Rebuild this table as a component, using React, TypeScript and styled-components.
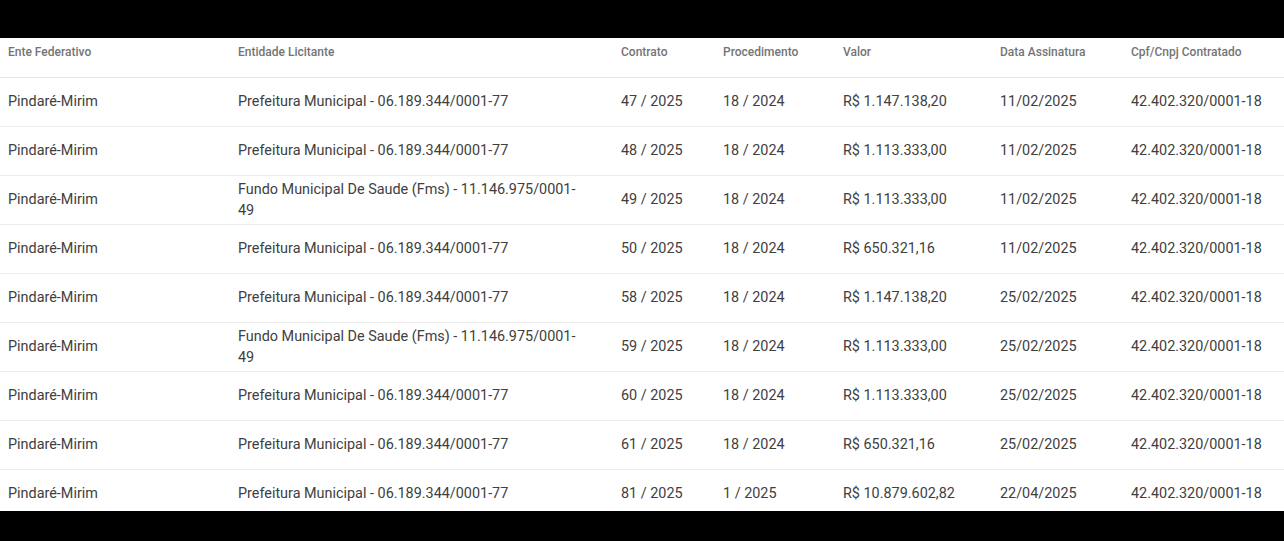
import styled, { createGlobalStyle } from "styled-components";

const GlobalStyle = createGlobalStyle`
    html, body {
        margin: 0;
        padding: 0;
        background: #000;
        font-family: Roboto, "Liberation Sans", sans-serif;
    }
`;

const Screen = styled.div`
    display: flex;
    flex-direction: column;
    width: 1284px;
    height: 541px;
    padding-top: 38px;
    box-sizing: border-box;
    background: #000;
    overflow: hidden;
`;

const Sheet = styled.div`
    background: #fff;
    width: 100%;
    height: 473px;
    overflow: hidden;
`;

const Table = styled.table`
    width: 100%;
    border-collapse: collapse;
    table-layout: fixed;
`;

const HeadCell = styled.th<{ $w: number }>`
    width: ${p => p.$w}px;
    height: 39px;
    padding: 7px 0 0 8px;
    box-sizing: border-box;
    vertical-align: top;
    text-align: left;
    font-size: 12px;
    font-weight: 500;
    color: #747474;
    border-bottom: 1px solid #e6e6e6;
`;

const Row = styled.tr`
    height: 49px;
    border-bottom: 1px solid #ebebeb;
`;

const Cell = styled.td<{ $pr?: number }>`
    padding: 0 ${p => p.$pr ?? 8}px 0 8px;
    font-size: 14.4px;
    line-height: 21px;
    color: #404040;
    vertical-align: middle;
`;

const columns = [
    { label: "Ente Federativo", w: 230 },
    { label: "Entidade Licitante", w: 383 },
    { label: "Contrato", w: 102 },
    { label: "Procedimento", w: 120 },
    { label: "Valor", w: 157 },
    { label: "Data Assinatura", w: 131 },
    { label: "Cpf/Cnpj Contratado", w: 161 },
];

const PREF = "Prefeitura Municipal - 06.189.344/0001-77";
const FMS = "Fundo Municipal De Saude (Fms) - 11.146.975/0001-49";

const contracts = [
    { ent: PREF, contrato: "47 / 2025", proc: "18 / 2024", valor: "R$ 1.147.138,20", data: "11/02/2025" },
    { ent: PREF, contrato: "48 / 2025", proc: "18 / 2024", valor: "R$ 1.113.333,00", data: "11/02/2025" },
    { ent: FMS, contrato: "49 / 2025", proc: "18 / 2024", valor: "R$ 1.113.333,00", data: "11/02/2025" },
    { ent: PREF, contrato: "50 / 2025", proc: "18 / 2024", valor: "R$ 650.321,16", data: "11/02/2025" },
    { ent: PREF, contrato: "58 / 2025", proc: "18 / 2024", valor: "R$ 1.147.138,20", data: "25/02/2025" },
    { ent: FMS, contrato: "59 / 2025", proc: "18 / 2024", valor: "R$ 1.113.333,00", data: "25/02/2025" },
    { ent: PREF, contrato: "60 / 2025", proc: "18 / 2024", valor: "R$ 1.113.333,00", data: "25/02/2025" },
    { ent: PREF, contrato: "61 / 2025", proc: "18 / 2024", valor: "R$ 650.321,16", data: "25/02/2025" },
    { ent: PREF, contrato: "81 / 2025", proc: "1 / 2025", valor: "R$ 10.879.602,82", data: "22/04/2025" },
];

export default function App() {
    return (
        <Screen>
            <GlobalStyle />
            <Sheet>
                <Table>
                    <thead>
                        <tr>
                            {columns.map(c => (
                                <HeadCell key={c.label} $w={c.w}>{c.label}</HeadCell>
                            ))}
                        </tr>
                    </thead>
                    <tbody>
                        {contracts.map(c => (
                            <Row key={c.contrato}>
                                <Cell>Pindaré-Mirim</Cell>
                                <Cell $pr={30}>{c.ent}</Cell>
                                <Cell>{c.contrato}</Cell>
                                <Cell>{c.proc}</Cell>
                                <Cell>{c.valor}</Cell>
                                <Cell>{c.data}</Cell>
                                <Cell>42.402.320/0001-18</Cell>
                            </Row>
                        ))}
                    </tbody>
                </Table>
            </Sheet>
        </Screen>
    );
}
